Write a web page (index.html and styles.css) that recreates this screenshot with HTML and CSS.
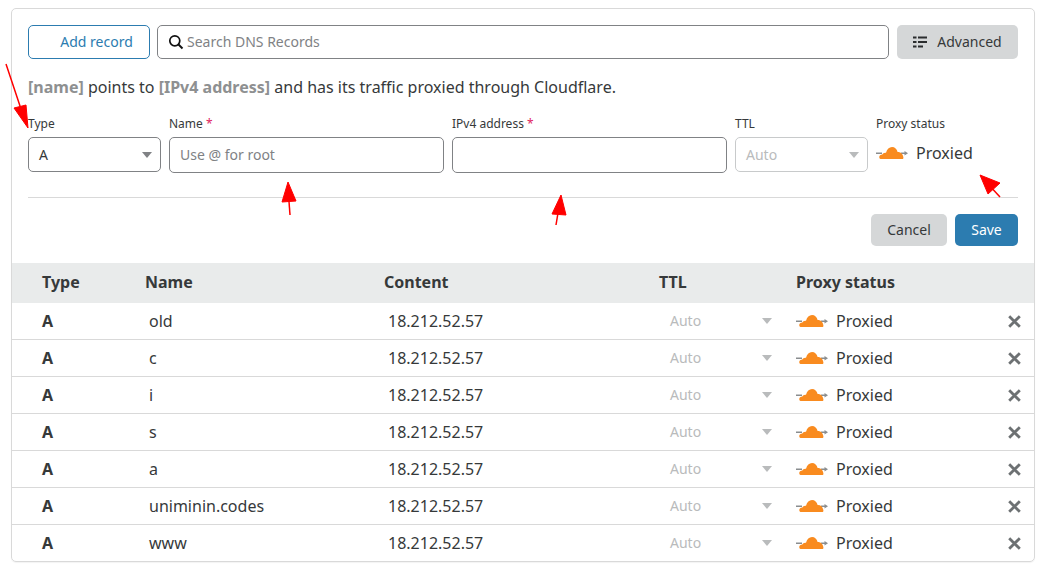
FILE: index.html
```html
<!DOCTYPE html>
<html lang="en">
<head>
<meta charset="UTF-8">
<title>DNS Records</title>
<link rel="stylesheet" href="styles.css">
</head>
<body>
<svg width="0" height="0" class="defs">
    <symbol id="cloud" viewBox="0 0 32 14">
        <path d="M0 7.200h6M25 7.200h5" stroke="#8a8d8f" stroke-width="1.500"/>
        <path d="M32 7.200l-3.500-2.200v4.400z" fill="#8a8d8f"/>
        <path d="M4 12.800C2.400 11.400 3.600 8.400 6.400 8.600 7 7.200 8.400 6.400 10 6.800 11 3.200 13.200 1 16 1c2.800 0 5 2 5.600 5 3-.2 5.400 2 5.800 5.400.1.900-.4 1.600-1.200 1.600H5c-.4 0-.7-.1-1-.2z" fill="#f98b1f"/>
    </symbol>
</svg>
<div class="card">
    <div class="toolbar">
        <button class="btn-add">Add record</button>
        <div class="search">
            <svg width="16" height="16" viewBox="0 0 16 16"><circle cx="6.800" cy="6.800" r="5" fill="none" stroke="#111" stroke-width="1.700"/><path d="M10.500 10.500l4 4" stroke="#111" stroke-width="1.900"/></svg>
            <span>Search DNS Records</span>
        </div>
        <button class="btn-advanced">
            <svg width="14" height="12" viewBox="0 0 14 12"><path d="M0 1.500h3.500M5 1.500H14M0 6h3.500M5 6H14M0 10.500h3.500M5 10.500H10" stroke="#2b2d2e" stroke-width="2.200"/></svg>
            Advanced
        </button>
    </div>
    <p class="summary"><b>[name]</b> points to <b>[IPv4 address]</b> and has its traffic proxied through Cloudflare.</p>
    <div class="form-row">
        <div class="field">
            <label>Type</label>
            <div class="select">A<i class="caret"></i></div>
        </div>
        <div class="field">
            <label>Name <em>*</em></label>
            <div class="input placeholder">Use @ for root</div>
        </div>
        <div class="field">
            <label>IPv4 address <em>*</em></label>
            <div class="input"></div>
        </div>
        <div class="field">
            <label>TTL</label>
            <div class="select disabled">Auto<i class="caret"></i></div>
        </div>
        <div class="field">
            <label>Proxy status</label>
            <div class="proxy-big"><svg width="32" height="14"><use href="#cloud"/></svg>Proxied</div>
        </div>
    </div>
    <div class="actions">
        <button class="btn-cancel">Cancel</button>
        <button class="btn-save">Save</button>
    </div>
    <div class="row head">
        <div>Type</div><div>Name</div><div>Content</div><div>TTL</div><div>Proxy status</div><div></div>
    </div>
    <div id="rows"></div>
</div>

<svg class="arrows" width="1043" height="572" viewBox="0 0 1043 572">
    <g fill="#f00" stroke="#f00">
        <path d="M6 64L24 118" stroke-width="1.500"/><path d="M28 128L14 108L26 105z"/>
        <path d="M290 215L288.500 195" stroke-width="1.500"/><path d="M288 182L282 202L296 201z"/>
        <path d="M556 225L559 207" stroke-width="1.500"/><path d="M561 195L552 214L566 215z"/>
        <path d="M1000 197L988 184" stroke-width="1.500"/><path d="M980 175L988 194L1000 183z"/>
    </g>
</svg>

<script>
    const records = ['old', 'c', 'i', 's', 'a', 'uniminin.codes', 'www'];
    const rows = document.getElementById('rows');
    records.forEach(function(name) {
        const row = document.createElement('div');
        row.className = 'row';
        row.innerHTML = '<div class="type">A</div>' +
            '<div class="cell">' + name + '</div>' +
            '<div class="cell">18.212.52.57</div>' +
            '<div class="ttl">Auto<i class="caret"></i></div>' +
            '<div class="proxy"><svg width="32" height="14"><use href="#cloud"/></svg>Proxied</div>' +
            '<div class="remove"><svg width="13" height="13" viewBox="0 0 13 13"><path d="M1.200 1.200l10.600 10.600M11.800 1.200L1.200 11.800" stroke="#6d7173" stroke-width="2.800"/></svg></div>';
        rows.appendChild(row);
    });
</script>
</body>
</html>
```

FILE: styles.css
```css
html, body {
    height: 572px;
    overflow: hidden;
}
body {
    margin: 0;
    padding: 8px 8px 0 11px;
    font-family: "Noto Sans", sans-serif;
    color: #36393a;
    background-color: #fff;
    box-sizing: border-box;
}
.defs {
    position: absolute;
}
.card {
    width: 1024px;
    height: 554px;
    box-sizing: border-box;
    border: 1px solid #d9d9d9;
    border-radius: 5px;
    padding-top: 16px;
    overflow: hidden;
    box-shadow: 0 1px 1px rgba(0,0,0,0.05);
}
button {
    font-family: inherit;
    font-size: 14px;
    border-radius: 5px;
    border: none;
    color: #36393a;
}
.toolbar {
    display: flex;
    gap: 8px;
    height: 34px;
    margin: 0 16px;
}
.btn-add {
    width: 122px;
    margin-right: -1px;
    padding: 0 0 2px 15px;
    background: #fff;
    border: 1px solid #2c7cb0;
    color: #2c7cb0;
}
.search {
    flex: 1;
    display: flex;
    align-items: center;
    gap: 3px;
    padding: 0 0 1px 10px;
    font-size: 14px;
    color: #808285;
    border: 1px solid #808285;
    border-radius: 5px;
}
.btn-advanced {
    width: 121px;
    display: flex;
    align-items: center;
    justify-content: center;
    gap: 10px;
    padding-bottom: 2px;
    background: #d5d7d8;
}
.summary {
    margin: 17px 16px 0;
    font-size: 16px;
    line-height: 22px;
}
.summary b {
    font-weight: 700;
    color: #8e9091;
}
.form-row {
    display: grid;
    grid-template-columns: 133px 275px 275px 133px 142px;
    column-gap: 8px;
    margin: 16px 16px 0;
    padding-bottom: 24px;
    border-bottom: 1px solid #d9d9d9;
}
.field label {
    display: block;
    height: 23px;
    font-size: 12px;
    line-height: 20px;
}
.field label em {
    font-style: normal;
    color: #e0245e;
}
.select, .input {
    height: 36px;
    box-sizing: border-box;
    border: 1px solid #808285;
    border-radius: 5px;
    font-size: 14px;
    line-height: 34px;
    padding-left: 10px;
}
.select {
    height: 35px;
    line-height: 33px;
    position: relative;
}
.placeholder {
    color: #808285;
}
.disabled {
    border-color: #c8cacb;
    color: #b9bbbc;
}
.caret {
    position: absolute;
    right: 8px;
    top: 14px;
    width: 0;
    height: 0;
    border-left: 5.5px solid transparent;
    border-right: 5.5px solid transparent;
    border-top: 6px solid #808285;
}
.disabled .caret, .ttl .caret {
    border-top-color: #b9bbbc;
}
.proxy-big {
    display: flex;
    align-items: center;
    gap: 8px;
    font-size: 16px;
    height: 32px;
}
.actions {
    display: flex;
    justify-content: flex-end;
    gap: 8px;
    height: 32px;
    margin: 16px 16px 0 0;
}
.btn-cancel {
    width: 76px;
    padding-bottom: 2px;
    background: #d5d7d8;
}
.btn-save {
    width: 63px;
    padding-bottom: 2px;
    background: #2c7cb0;
    color: #fff;
}
.row {
    display: grid;
    grid-template-columns: 103px 239px 275px 137px 1fr 26px;
    align-items: center;
    height: 37px;
    box-sizing: border-box;
    padding-left: 30px;
    font-size: 16px;
    border-bottom: 1px solid #d9d9d9;
}
.head {
    height: 40px;
    margin-top: 17px;
    padding-bottom: 2px;
    font-weight: 700;
    background: #e9ebeb;
    border-bottom: none;
}
.type {
    font-weight: 700;
}
.cell {
    padding-left: 4px;
}
.ttl {
    position: relative;
    padding: 0 0 2px 11px;
    font-size: 14px;
    color: #b9bbbc;
}
.ttl .caret {
    right: 24px;
    top: 7px;
}
.proxy {
    display: flex;
    align-items: center;
    gap: 8px;
}
.remove {
    display: flex;
    align-items: center;
}
.arrows {
    position: absolute;
    left: 0;
    top: 0;
    pointer-events: none;
}
```
